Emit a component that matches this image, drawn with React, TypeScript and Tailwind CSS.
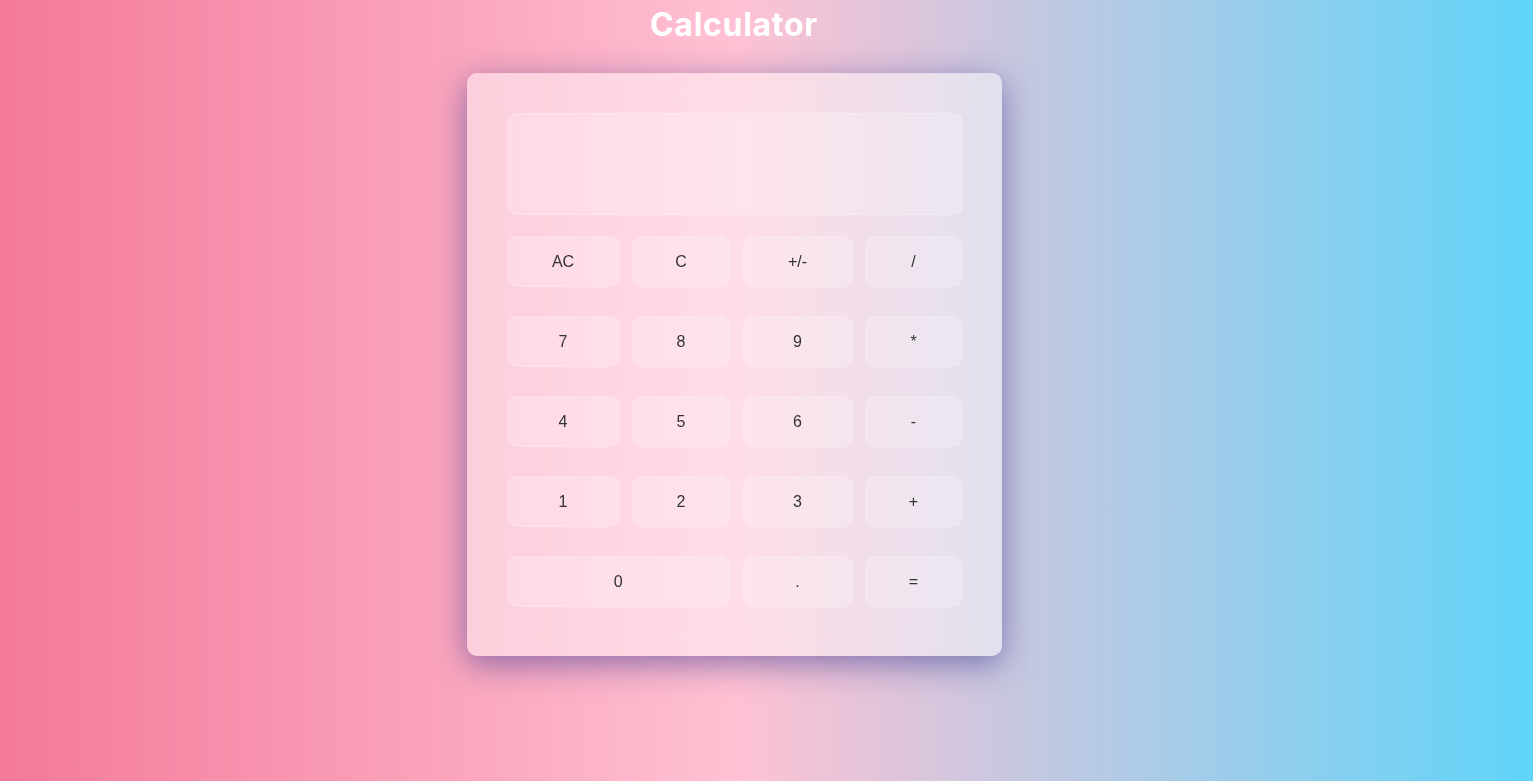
import React from "react";

const rows: { label: string; span?: boolean }[][] = [
  [{ label: "AC" }, { label: "C" }, { label: "+/-" }, { label: "/" }],
  [{ label: "7" }, { label: "8" }, { label: "9" }, { label: "*" }],
  [{ label: "4" }, { label: "5" }, { label: "6" }, { label: "-" }],
  [{ label: "1" }, { label: "2" }, { label: "3" }, { label: "+" }],
  [{ label: "0", span: true }, { label: "." }, { label: "=" }],
];

export default function App() {
  return (
    <div
      className="min-h-[781px] w-full flex flex-col items-center pr-[65px] bg-[linear-gradient(to_right,#f4799a_0%,#ffc1d3_48%,#5fd4f9_100%)]"
      style={{ fontFamily: '"Liberation Sans", Arial, sans-serif' }}
    >
      <h1
        className="mt-[1px] text-[32px] leading-[48px] font-bold text-white tracking-[0.7px]"
        style={{ fontFamily: 'Inter, "Noto Sans", sans-serif' }}
      >
        Calculator
      </h1>
      <div className="mt-[24px] w-[535px] rounded-[10px] bg-white/45 backdrop-blur-md shadow-[0_8px_32px_0_rgba(31,38,135,0.5)] px-[40px] pt-[40px] pb-[49px]">
        <div className="h-[102px] w-[456px] rounded-[10px] bg-white/20 border border-white/20" />
        <div className="mt-[21px] grid grid-cols-[113px_98px_110px_97px] gap-x-[12.5px] gap-y-[29px]">
          {rows.flat().map((b) => (
            <button
              key={b.label}
              className={`${b.span ? "col-span-2" : ""} h-[51px] rounded-[10px] bg-white/20 border border-white/15 text-[16px] text-[#333]`}
            >
              {b.label}
            </button>
          ))}
        </div>
      </div>
    </div>
  );
}
